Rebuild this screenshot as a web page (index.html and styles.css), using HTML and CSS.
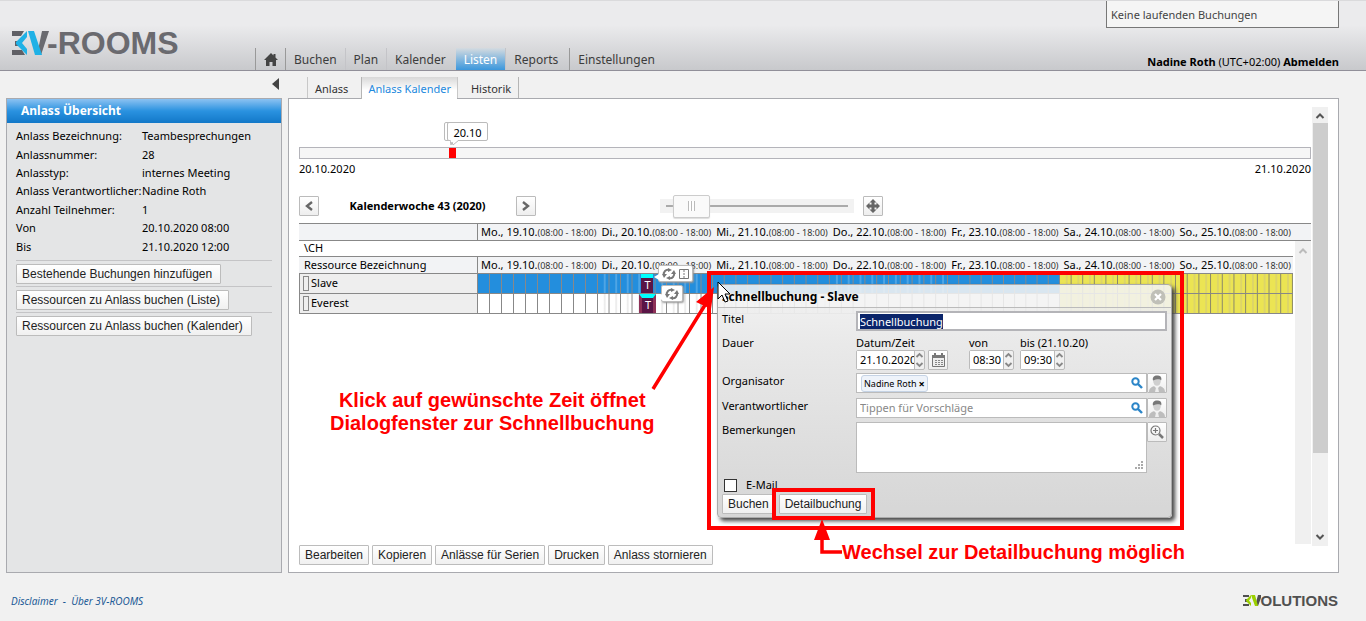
FILE: index.html
```html
<!DOCTYPE html>
<html lang="de">
<head>
<meta charset="utf-8">
<title>3V-ROOMS – Anlass Kalender</title>
<link rel="stylesheet" href="styles.css">
</head>
<body>
<svg class="defs" aria-hidden="true">
  <symbol id="i-recur" viewBox="0 0 14 12"><path d="M2 7C1 4 4 1 7 2M12 5c1 3-2 6-5 5" fill="none" stroke="#777" stroke-width="2"/><path d="M0 6h5L2 10zM14 6H9l3-4zM6 0l4 2-4 2zM8 12l-4-2 4-2z" fill="#777"/></symbol>
  <symbol id="i-search" viewBox="0 0 12 12"><circle cx="4.500" cy="4.500" r="3.200" fill="none" stroke="#2b85c8" stroke-width="2"/><path d="M7 7l4 4" stroke="#2b85c8" stroke-width="2.400"/></symbol>
  <symbol id="i-person" viewBox="0 0 16 17"><ellipse cx="8" cy="6" rx="3.800" ry="4.800" fill="#cfcfcf"/><path d="M4 5.500C3 1.500 6 0 9 .5c3 0 4 3 3 5-1-2-5-1-8 0z" fill="#777"/><path d="M0 17c0-4 3-5 5-6l3 3 3-3c2 1 5 2 5 6z" fill="#bdbdbd"/><path d="M7 12.500h2l1 4.500H6z" fill="#eee"/></symbol>
</svg>

<header class="top">
  <a class="logo" href="#" aria-label="3V-ROOMS">
    <svg width="38" height="24" viewBox="0 0 38 24"><path d="M1 0h12l-3 5H1zM4 10h5v5H4zM1 19h10l3 5H1z" fill="#606066"/><path d="M16 0v6l-5 6 5 6v6L5 13v-2z" fill="#1fb1e6"/><path d="M31 0h7l-8 24h-4z" fill="#6a6a6f"/><path d="M17 0h6l8 24h-7z" fill="#1fb1e6"/></svg><span>-ROOMS</span>
  </a>
  <nav class="menu">
    <a class="home" href="#" aria-label="Start"><svg width="14" height="13" viewBox="0 0 14 13"><path d="M7 0l2.500 2.500V1h2v3.500L14 7h-2v6H8.500V9h-3v4H2V7H0z" fill="#444"/></svg></a>
    <a href="#">Buchen</a><a href="#">Plan</a><a href="#">Kalender</a><a class="on" href="#">Listen</a><a href="#">Reports</a><a class="edge" href="#">Einstellungen</a>
  </nav>
  <div class="account">
    <div class="running">Keine laufenden Buchungen</div>
    <div class="user"><b>Nadine Roth</b> (UTC+02:00) <a href="#">Abmelden</a></div>
  </div>
</header>

<main class="main">
  <aside class="side">
    <button class="collapse" aria-label="Einklappen"></button>
    <section class="card">
      <h2>Anlass Übersicht</h2>
      <dl>
        <dt>Anlass Bezeichnung:</dt><dd>Teambesprechungen</dd>
        <dt>Anlassnummer:</dt><dd>28</dd>
        <dt>Anlasstyp:</dt><dd>internes Meeting</dd>
        <dt>Anlass Verantwortlicher:</dt><dd>Nadine Roth</dd>
        <dt>Anzahl Teilnehmer:</dt><dd>1</dd>
        <dt>Von</dt><dd>20.10.2020 08:00</dd>
        <dt>Bis</dt><dd>21.10.2020 12:00</dd>
      </dl>
      <div class="act"><button class="btn">Bestehende Buchungen hinzufügen</button></div>
      <div class="act"><button class="btn">Ressourcen zu Anlass buchen (Liste)</button></div>
      <div class="act"><button class="btn">Ressourcen zu Anlass buchen (Kalender)</button></div>
    </section>
  </aside>

  <section class="content">
    <nav class="tabs"><a href="#">Anlass</a><a class="on" href="#">Anlass Kalender</a><a href="#">Historik</a></nav>
    <div class="panel">
      <div class="body">
        <div class="timeline">
          <div class="bar"><i class="mark"></i>
            <span class="flag back"></span><span class="flag">20.10<svg width="10" height="6" viewBox="0 0 10 6"><path d="M0 0l1 5 1-3 1 3 6-5" fill="#fff" stroke="#bbb"/></svg></span></div>
          <div class="ends"><span>20.10.2020</span><span>21.10.2020</span></div>
        </div>
        <div class="controls">
          <button class="sq" aria-label="Zurück"><svg width="10" height="12" viewBox="0 0 10 12"><path d="M8 2L3 6l5 4" fill="none" stroke="#666" stroke-width="2.400"/></svg></button>
          <strong>Kalenderwoche 43 (2020)</strong>
          <button class="sq" aria-label="Weiter"><svg width="10" height="12" viewBox="0 0 10 12"><path d="M2 2l5 4-5 4" fill="none" stroke="#666" stroke-width="2.400"/></svg></button>
          <input class="zoom" type="range" min="0" max="100" value="8" aria-label="Zoom">
          <button class="sq" aria-label="Verschieben"><svg width="14" height="14" viewBox="0 0 14 14"><path d="M7 0l3.500 3.500H8.500v2h2V3.500L14 7l-3.500 3.500V8.500h-2v2h2L7 14l-3.500-3.500h2v-2h-2v2L0 7l3.500-3.500v2h2v-2h-2z" fill="#666"/></svg></button>
        </div>
        <div class="gridwrap">
          <div class="strip"></div>
          <table class="cal">
            <colgroup><col class="res"><col><col><col><col><col><col><col></colgroup>
            <tr class="days"><th></th><th>Mo., 19.10.<small>(08:00 - 18:00)</small></th><th>Di., 20.10.<small>(08:00 - 18:00)</small></th><th>Mi., 21.10.<small>(08:00 - 18:00)</small></th><th>Do., 22.10.<small>(08:00 - 18:00)</small></th><th>Fr., 23.10.<small>(08:00 - 18:00)</small></th><th>Sa., 24.10.<small>(08:00 - 18:00)</small></th><th>So., 25.10.<small>(08:00 - 18:00)</small></th></tr>
            <tr class="group"><td colspan="8">\CH</td></tr>
            <tr class="days"><th>Ressource Bezeichnung</th><th>Mo., 19.10.<small>(08:00 - 18:00)</small></th><th>Di., 20.10.<small>(08:00 - 18:00)</small></th><th>Mi., 21.10.<small>(08:00 - 18:00)</small></th><th>Do., 22.10.<small>(08:00 - 18:00)</small></th><th>Fr., 23.10.<small>(08:00 - 18:00)</small></th><th>Sa., 24.10.<small>(08:00 - 18:00)</small></th><th>So., 25.10.<small>(08:00 - 18:00)</small></th></tr>
            <tr class="slots busy"><th><i></i>Slave</th><td></td><td class="half"><span class="ev slim">T</span><span class="tip"><svg width="14" height="12"><use href="#i-recur"/></svg><svg width="10" height="10" viewBox="0 0 10 10"><path d="M.5.500h9v9h-9z" fill="#fff" stroke="#777"/><path d="M5 1v8" stroke="#777" stroke-dasharray="2 1"/></svg></span></td><td></td><td class="half"></td><td></td><td class="we"></td><td class="we"></td></tr>
            <tr class="slots"><th><i></i>Everest</th><td></td><td class="half"><span class="ev wide">T</span><span class="tip low"><svg width="14" height="12"><use href="#i-recur"/></svg></span></td><td class="half"></td><td></td><td></td><td class="we"></td><td class="we"></td></tr>
          </table>
          <div class="inner-scroll"><svg width="10" height="8" viewBox="0 0 10 8"><path d="M1.500 6L5 2.500 8.500 6" fill="none" stroke="#bbb" stroke-width="2"/></svg></div>
        </div>
        <div class="actions"><button class="btn">Bearbeiten</button><button class="btn">Kopieren</button><button class="btn">Anlässe für Serien</button><button class="btn">Drucken</button><button class="btn">Anlass stornieren</button></div>
      </div>
      <div class="scroll">
        <svg width="10" height="8" viewBox="0 0 10 8"><path d="M1.500 6L5 2.500 8.500 6" fill="none" stroke="#555" stroke-width="2"/></svg>
        <div class="thumb"></div>
        <svg width="10" height="8" viewBox="0 0 10 8"><path d="M1.500 2L5 5.500 8.500 2" fill="none" stroke="#555" stroke-width="2"/></svg>
      </div>

      <form class="dialog">
        <header><h3>Schnellbuchung - Slave</h3><button type="button" class="close" aria-label="Schliessen"><svg width="16" height="16" viewBox="0 0 16 16"><circle cx="8" cy="8" r="7.500" fill="#c0c0b8"/><path d="M5 5l6 6M11 5l-6 6" stroke="#fff" stroke-width="2.200"/></svg></button></header>
        <div class="fields">
          <label class="first" for="titel">Titel</label>
          <div class="cell first"><input id="titel" class="title" value="Schnellbuchung"></div>
          <span class="lab">Dauer</span>
          <div class="cell times">
            <div class="t"><label for="datum">Datum/Zeit</label><div class="row"><span class="spin date"><input id="datum" value="21.10.2020"><svg width="9" height="18" viewBox="0 0 9 18"><path d="M1.500 6l3-3 3 3M1.500 12l3 3 3-3" fill="none" stroke="#888" stroke-width="1.800"/></svg></span><button type="button" class="sq" aria-label="Kalender"><svg width="13" height="14" viewBox="0 0 13 14"><path d="M.5 2.500h12v11H.5z" fill="#eee" stroke="#777"/><path d="M0 2h13v3H0zM2 0h2v2H2zM9 0h2v2H9z" fill="#777"/><path d="M3 7.500h8M3 9.500h8M3 11.500h8" stroke="#888" stroke-dasharray="2 1"/></svg></button></div></div>
            <div class="t"><label for="von">von</label><span class="spin"><input id="von" value="08:30"><svg width="9" height="18" viewBox="0 0 9 18"><path d="M1.500 6l3-3 3 3M1.500 12l3 3 3-3" fill="none" stroke="#888" stroke-width="1.800"/></svg></span></div>
            <div class="t"><label for="bis">bis (21.10.20)</label><span class="spin"><input id="bis" value="09:30"><svg width="9" height="18" viewBox="0 0 9 18"><path d="M1.500 6l3-3 3 3M1.500 12l3 3 3-3" fill="none" stroke="#888" stroke-width="1.800"/></svg></span></div>
          </div>
          <label for="org">Organisator</label>
          <div class="cell"><div class="box"><span class="token">Nadine Roth<b>×</b></span><input id="org"><svg width="12" height="12"><use href="#i-search"/></svg></div><button type="button" class="sq" aria-label="Person"><svg width="16" height="17"><use href="#i-person"/></svg></button></div>
          <label for="ver">Verantwortlicher</label>
          <div class="cell"><div class="box"><input id="ver" placeholder="Tippen für Vorschläge"><svg width="12" height="12"><use href="#i-search"/></svg></div><button type="button" class="sq" aria-label="Person"><svg width="16" height="17"><use href="#i-person"/></svg></button></div>
          <label for="bem">Bemerkungen</label>
          <div class="cell"><div class="area"><textarea id="bem"></textarea><svg width="9" height="9" viewBox="0 0 9 9"><path d="M6 0h2v2H6zM3 3h2v2H3zM6 3h2v2H6zM0 6h2v2H0zM3 6h2v2H3zM6 6h2v2H6z" fill="#aaa"/></svg></div><button type="button" class="sq" aria-label="Vergrössern"><svg width="14" height="14" viewBox="0 0 14 14"><circle cx="5.500" cy="5.500" r="4.500" fill="none" stroke="#777" stroke-width="1.200"/><path d="M5.500 3v5M3 5.500h5" stroke="#777" stroke-width="1.200"/><path d="M9 9l4 4" stroke="#777" stroke-width="2.500"/></svg></button></div>
        </div>
        <div class="mail"><input id="mail" type="checkbox"><label for="mail">E-Mail</label></div>
        <div class="submit"><button type="button" class="btn">Buchen</button><button type="button" class="btn">Detailbuchung</button></div>
      </form>

      <svg class="marks" width="1049" height="473" viewBox="289 99 1049 473" aria-hidden="true">
        <path d="M709 273h473v255H709zM774 490h99v28h-99z" fill="none" stroke="#f00" stroke-width="4"/>
        <path d="M653 389l52-84M822 535v17h20" fill="none" stroke="#f00" stroke-width="3.500"/>
        <path d="M714 287l-3 22-15-7zM822 519l8 21h-16z" fill="#f00"/>
        <path d="M718 282v17l4-4 3 7 3-1-3-7h5z" fill="#fff" stroke="#000"/>
      </svg>
      <p class="note click">Klick auf gewünschte Zeit öffnet<br>Dialogfenster zur Schnellbuchung</p>
      <p class="note detail">Wechsel zur Detailbuchung möglich</p>
    </div>
  </section>
</main>

<footer class="foot">
  <div><a href="#">Disclaimer</a> &nbsp;-&nbsp; <a href="#">Über 3V-ROOMS</a></div>
  <a class="vol" href="#" aria-label="3VOLUTIONS"><svg width="18" height="11" viewBox="0 0 18 11"><path d="M0 0h6v2H0zM2 4h4v3H2zM0 9h6v2H0z" fill="#505050"/><path d="M8 0v3L6 5.500 8 8v3L3 6V5z" fill="#9bd000"/><path d="M15 0h4l-4 11h-3z" fill="#505050"/><path d="M8 0h4l3 11h-3z" fill="#9bd000"/></svg><span>OLUTIONS</span></a>
</footer>
<script src="main.js"></script>
</body>
</html>
```
FILE: main.js
```js
const title = document.getElementById('titel');
title.focus();
title.select();
```
FILE: styles.css
```css
* { box-sizing: border-box; }
body { margin: 0; min-height: 100vh; display: flex; flex-direction: column; background: #f1f1f1; color: #000; font: 11px/16px "Noto Sans", sans-serif; }
a { color: inherit; text-decoration: none; }
button, input, textarea { font: inherit; color: inherit; margin: 0; }
svg { display: block; flex: none; }
.defs { position: absolute; width: 0; height: 0; }

.top { display: flex; align-items: flex-end; height: 71px; padding: 0 27px 0 11px; border-top: 1px solid #dadadc; border-bottom: 1px solid #918f99; background: linear-gradient(#ebebed 35%, #c8c9cc); }
.logo { display: flex; align-items: center; width: 244px; margin-bottom: 15px; font: bold 32px/24px "Liberation Sans", sans-serif; color: #6a6a6f; }
.logo svg { margin-right: -2px; }
.menu { display: flex; flex: 1; font-size: 12px; color: #3c3c3c; }
.menu a { height: 22px; padding: 0 8px; line-height: 24px; border-left: 1px solid #c4c4c8; }
.menu .home { display: flex; align-items: center; width: 31px; border-left: 1px solid #999; border-right: 1px solid #999; }
.menu .home + a, .menu .on { border-left: 0; }
.menu .on { margin-left: 2px; background: linear-gradient(#d5dbe0, #3b97dc); color: #fff; }
.menu .edge { margin-left: 3px; border-left: 1px solid #999; }
.account { display: flex; flex-direction: column; justify-content: space-between; align-self: stretch; width: 233px; }
.running { height: 27px; padding: 6px 4px; border: 1px solid #777; border-top: 0; background: #f5f5f5; color: #444; }
.user { text-align: right; white-space: nowrap; }
.user a { font-weight: bold; }

.main { display: flex; flex: 1; gap: 6px; padding: 0 27px 0 6px; }
.side { display: flex; flex-direction: column; width: 276px; }
.collapse { align-self: flex-end; width: 7px; height: 12px; margin: 7px 3px 8px; padding: 0; border: 0; background: #444; clip-path: polygon(0 50%, 100% 0, 100% 100%); }
.card { flex: 1; border: 1px solid #a9aaaf; background: #e4e5e6; }
.card h2 { margin: 0; padding-left: 14px; font-size: 12px; line-height: 24px; color: #fff; background: linear-gradient(#8cc2f2, #2a92e0 50%, #1278c8); }
.card dl { display: grid; grid-template-columns: 126px 1fr; align-items: center; height: 129px; margin: 4px 9px; white-space: nowrap; }
.card dd { margin: 0; }
.act { margin: 0 9px; padding-top: 3px; height: 26px; border-top: 1px solid #c4c4c6; }
.btn { height: 20px; padding: 0 5px; border: 1px solid #bcbcbc; border-radius: 1px; background: linear-gradient(#fff, #f0f0f0); font: 12px/16px "Liberation Sans", sans-serif; color: #222; white-space: nowrap; }
.act .btn { padding-right: 8px; }

.content { display: flex; flex-direction: column; flex: 1; min-width: 0; }
.tabs { display: flex; height: 27px; padding: 6px 0 0 19px; font-size: 11px; }
.tabs a { padding: 0 7px; line-height: 24px; border-left: 1px solid #c8c8c8; color: #333; }
.tabs .on { position: relative; z-index: 1; height: 22px; margin-left: 6px; padding: 0 6px; background: linear-gradient(#d8d8d8, #fff 60%); color: #2288dd; border-left-color: #b5b5b5; }
.tabs a:last-child { padding-left: 13px; border-right: 1px solid #b5b5b5; }
.panel { position: relative; display: flex; flex: 1; padding: 8px 10px 7px; border: 1px solid #a9aaaf; background: #fff; }
.body { display: flex; flex-direction: column; flex: 1; min-width: 0; }
.timeline { padding-top: 40px; }
.bar { position: relative; height: 12px; border: 1px solid #b4b4ba; background: #f6f6f6; }
.mark { position: absolute; left: 149px; width: 7px; height: 10px; background: #f00; }
.flag { position: absolute; left: 147px; top: -26px; width: 41px; height: 19px; border: 1px solid #bbb; border-radius: 2px; background: #fff; text-align: center; line-height: 20px; }
.flag.back { left: 144px; }
.flag svg { position: absolute; left: 2px; top: 17px; }
.ends { display: flex; justify-content: space-between; padding-top: 2px; }
.controls { display: flex; align-items: center; height: 24px; margin-top: 17px; }
.controls strong { width: 197px; text-align: center; }
.sq { display: flex; align-items: center; justify-content: center; flex: none; width: 20px; height: 20px; padding: 0; border: 1px solid #bbb; border-radius: 1px; background: linear-gradient(#fff, #eee); }
.zoom { appearance: none; width: 194px; height: 14px; margin: 0 9px 0 124px; background: linear-gradient(#aaa, #aaa) center / 182px 2px no-repeat #f2f2f2; }
.zoom::-webkit-slider-thumb { appearance: none; width: 37px; height: 23px; border: 1px solid #ccc; border-radius: 2px; background: repeating-linear-gradient(90deg, #bbb 0 1px, #fff 1px 3px) center / 7px 10px no-repeat #fafafa; box-shadow: 0 1px 1px #ddd; }

.gridwrap { position: relative; display: flex; flex: 1; margin: 5px 0 1px; }
.strip { position: absolute; inset: 0 0 auto; height: 18px; border: solid #888; border-width: 1px 0; background: #f2f3f5; }
.cal { position: relative; flex: 1; align-self: flex-start; margin-right: 2px; border-collapse: separate; border-spacing: 0; table-layout: fixed; line-height: 14px; white-space: nowrap; }
.cal .res { width: 179px; }
.cal th { padding: 0 0 0 3px; font-weight: normal; text-align: left; }
.cal th:first-child { padding-left: 5px; border-right: 1px solid #888; }
.cal small { font-size: 9px; line-height: 9px; color: #333; }
.days th { height: 18px; border: solid #888; border-width: 1px 0; background: #f2f3f5; }
.group td { height: 15px; padding: 0 0 1px 5px; }
.slots th { height: 20px; background: #eee; border-bottom: 1px solid #888; border-left: 1px solid #888; }
.cal .slots th { padding-left: 3px; }
.slots i { display: inline-block; width: 6px; height: 15px; margin-right: 2px; border: 1px solid #888; vertical-align: top; }
.slots td { position: relative; height: 20px; padding: 0; border-bottom: 1px solid #888; background: linear-gradient(90deg, transparent calc(100% - 1px), #888 0) 0 0 / 10% 100%; }
.slots .half { background: linear-gradient(90deg, transparent calc(100% - 1px), #888 0) 0 0 / 10% 100%, linear-gradient(90deg, transparent 48%, #ddd8 48% 66%, transparent 0) 0 0 / 10% 100%; }
.busy td { background-color: #238edd; }
.busy .half { background: linear-gradient(90deg, transparent calc(100% - 1px), #888 0) 0 0 / 10% 100%, linear-gradient(90deg, transparent 48%, #fff3 48% 66%, transparent 0) 0 0 / 10% 100%, #238edd; }
.slots .we { background: linear-gradient(90deg, transparent calc(100% - 1px), #88866a 0) 0 0 / 10% 100%, linear-gradient(90deg, transparent 50%, #ddd568 50% 68%, transparent 0) 0 0 / 10% 100%, #ebe453; }
.ev { position: absolute; top: 0; height: 19px; border-top: 4px solid #0ff; background: #5a1546; color: #fff; text-align: center; }
.ev.slim { left: 43px; width: 12px; }
.ev.wide { left: 41px; width: 17px; border-left: 3px solid #8e3157; border-right: 3px solid #8e3157; }
.tip { position: absolute; z-index: 2; left: 60px; top: -9px; display: flex; align-items: center; gap: 3px; height: 17px; padding: 0 3px; border: 1px solid #bbb; border-radius: 2px; background: #fff; box-shadow: 1px 1px 2px #999; }
.tip.low { left: 63px; }
.tip::before { content: ""; position: absolute; left: -5px; top: 8px; border: solid transparent; border-width: 3px 5px 3px 0; border-right-color: #fff; }
.inner-scroll { display: flex; justify-content: center; width: 16px; margin-top: 18px; padding-top: 6px; background: #f0f0f0; }
.actions { display: flex; gap: 3px; }
.scroll { display: flex; flex-direction: column; align-items: center; width: 16px; margin: 0 0 19px 1px; padding: 5px 0; background: #f0f0f0; }
.thumb { width: 15px; height: 330px; margin: 3px 0 auto; background: #cdcdcd; }

.dialog { position: absolute; left: 428px; top: 185px; width: 455px; height: 234px; border: 1px solid #aaa; border-radius: 4px; background: linear-gradient(transparent 23px, #eeee 23px, #e9e9e9 60px, #d6d6d6); box-shadow: 3px 3px 4px #444; }
.dialog header { display: flex; align-items: center; justify-content: space-between; height: 23px; padding: 1px 5px 0 4px; border-bottom: 1px solid #bbb; border-radius: 4px 4px 0 0; background: #f3f3f3e0; }
.dialog h3 { margin: 0; font-size: 12px; line-height: 18px; }
.close { padding: 0; border: 0; background: none; }
.fields { display: grid; grid-template-columns: 134px 1fr; grid-template-rows: 27px 38px 25px 24px 54px; padding: 0 4px; }
.cell { display: flex; align-items: flex-start; }
.fields .first { padding-top: 3px; }
.title { width: 100%; height: 20px; padding: 0 2px; border: 2px solid #b4b4b8; outline: 0; background: #fff; }
.title::selection { background: #0a246a; color: #fff; }
.times { line-height: 14px; padding-top: 1px; }
.t { width: 51px; white-space: nowrap; }
.t:first-child { width: 113px; }
.row { display: flex; gap: 3px; }
.spin { display: flex; width: 45px; height: 20px; border: 1px solid #bbb; background: #f0f0f0; border-radius: 2px; }
.spin.date { width: 69px; }
.spin input { flex: 1; min-width: 0; width: 0; padding: 0 0 0 3px; border: 0; border-right: 1px solid #bbb; background: #fff; }
.box { display: flex; align-items: center; flex: 1; height: 20px; padding: 0 3px; border: 1px solid #bbb; background: #fff; }
.box input { flex: 1; min-width: 0; padding: 0; border: 0; background: none; }
.box input::placeholder { color: #888; opacity: 1; }
.token { display: flex; gap: 2px; margin-left: 1px; padding: 1px 2px 0; border: 1px solid #c5d3e5; border-radius: 3px; background: #eef3fa; font-size: 9px; line-height: 14px; }
.token b { font-size: 11px; }
.area { position: relative; flex: 1; height: 51px; }
.area svg { position: absolute; right: 3px; bottom: 3px; }
.area textarea { display: block; width: 100%; height: 100%; border: 1px solid #bbb; resize: none; background: #fff; }
.mail { display: flex; align-items: center; gap: 9px; height: 18px; padding-left: 6px; }
.mail input { appearance: none; width: 13px; height: 13px; border: 1px solid #333; background: #fff; }
.submit { display: flex; gap: 4px; padding-left: 4px; }

.marks { position: absolute; left: 0; top: 0; z-index: 3; pointer-events: none; }
.note { position: absolute; z-index: 3; margin: 0; color: #f00; font: bold 20px/23px "Liberation Sans", sans-serif; text-align: center; white-space: nowrap; }
.click { left: 41px; top: 290px; }
.detail { left: 553px; top: 442px; }

.foot { display: flex; align-items: center; justify-content: space-between; height: 48px; padding: 7px 28px 0 11px; font-size: 10px; font-style: italic; color: #1c5a96; }
.vol { display: flex; align-items: center; font: bold 15px/15px "Liberation Sans", sans-serif; color: #505050; }
```
